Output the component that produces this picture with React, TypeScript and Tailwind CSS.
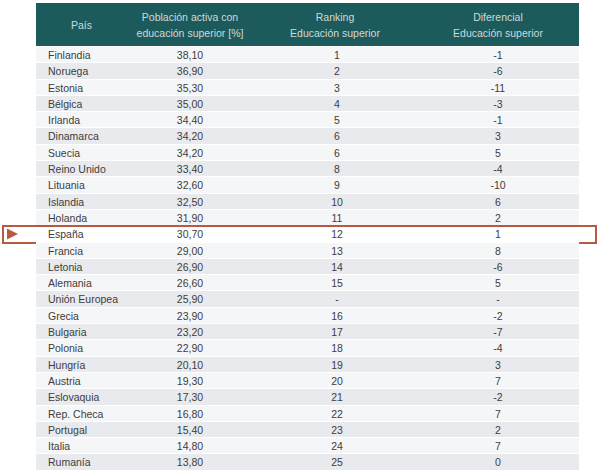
type Row = {
  pais: string;
  poblacion: string;
  ranking: string;
  diferencial: string;
};

const rows: Row[] = [
  { pais: "Finlandia", poblacion: "38,10", ranking: "1", diferencial: "-1" },
  { pais: "Noruega", poblacion: "36,90", ranking: "2", diferencial: "-6" },
  { pais: "Estonia", poblacion: "35,30", ranking: "3", diferencial: "-11" },
  { pais: "Bélgica", poblacion: "35,00", ranking: "4", diferencial: "-3" },
  { pais: "Irlanda", poblacion: "34,40", ranking: "5", diferencial: "-1" },
  { pais: "Dinamarca", poblacion: "34,20", ranking: "6", diferencial: "3" },
  { pais: "Suecia", poblacion: "34,20", ranking: "6", diferencial: "5" },
  { pais: "Reino Unido", poblacion: "33,40", ranking: "8", diferencial: "-4" },
  { pais: "Lituania", poblacion: "32,60", ranking: "9", diferencial: "-10" },
  { pais: "Islandia", poblacion: "32,50", ranking: "10", diferencial: "6" },
  { pais: "Holanda", poblacion: "31,90", ranking: "11", diferencial: "2" },
  { pais: "España", poblacion: "30,70", ranking: "12", diferencial: "1" },
  { pais: "Francia", poblacion: "29,00", ranking: "13", diferencial: "8" },
  { pais: "Letonia", poblacion: "26,90", ranking: "14", diferencial: "-6" },
  { pais: "Alemania", poblacion: "26,60", ranking: "15", diferencial: "5" },
  { pais: "Unión Europea", poblacion: "25,90", ranking: "-", diferencial: "-" },
  { pais: "Grecia", poblacion: "23,90", ranking: "16", diferencial: "-2" },
  { pais: "Bulgaria", poblacion: "23,20", ranking: "17", diferencial: "-7" },
  { pais: "Polonia", poblacion: "22,90", ranking: "18", diferencial: "-4" },
  { pais: "Hungría", poblacion: "20,10", ranking: "19", diferencial: "3" },
  { pais: "Austria", poblacion: "19,30", ranking: "20", diferencial: "7" },
  { pais: "Eslovaquia", poblacion: "17,30", ranking: "21", diferencial: "-2" },
  { pais: "Rep. Checa", poblacion: "16,80", ranking: "22", diferencial: "7" },
  { pais: "Portugal", poblacion: "15,40", ranking: "23", diferencial: "2" },
  { pais: "Italia", poblacion: "14,80", ranking: "24", diferencial: "7" },
  { pais: "Rumanía", poblacion: "13,80", ranking: "25", diferencial: "0" },
];

const cols = "grid grid-cols-[91px_126px_164px_162px]";

export default function App() {
  return (
    <main
      className="h-[476px] w-[600px] bg-white pt-[3px] text-[10.5px] text-[#3d3d3d]"
      style={{ fontFamily: '"Liberation Sans", Arial, sans-serif' }}
    >
      <div className="ml-[36px] w-[543px]">
        {/* header */}
        <div className={`${cols} h-[43px] bg-[#1d5a5b] leading-[16px] text-[#ccdada]`}>
          <div className="flex items-center justify-center">País</div>
          <div className="flex flex-col items-center justify-center">
            <span>Población activa con</span>
            <span>educación superior [%]</span>
          </div>
          <div className="flex flex-col items-center justify-center">
            <span>Ranking</span>
            <span>Educación superior</span>
          </div>
          <div className="flex flex-col items-center justify-center">
            <span>Diferencial</span>
            <span>Educación superior</span>
          </div>
        </div>

        {rows.map((row, index) => {
          const highlighted = row.pais === "España";
          const bg = highlighted
            ? "bg-white"
            : index % 2 === 0
              ? "bg-[#f5f6f7]"
              : "bg-[#e8eaed]";
          return (
            <div
              key={row.pais}
              className={`${cols} relative h-[16.3px] border-t border-white pt-px ${bg}`}
            >
              <div className="flex items-center pl-[12px]">{row.pais}</div>
              <div className="flex items-center justify-center">{row.poblacion}</div>
              <div className="flex items-center justify-center pl-[4px]">{row.ranking}</div>
              <div className="flex items-center justify-center">{row.diferencial}</div>
              {highlighted && (
                <div className="pointer-events-none absolute -top-[1px] -bottom-[2px] -left-[34px] -right-[18px] border-2 border-[#b85a41]">
                  <svg
                    className="absolute left-[3px] top-1/2 -translate-y-1/2"
                    width="11"
                    height="11"
                    viewBox="0 0 11 11"
                  >
                    <polygon points="0,0 11,5.5 0,11" fill="#b85a41" />
                  </svg>
                </div>
              )}
            </div>
          );
        })}
      </div>
    </main>
  );
}
